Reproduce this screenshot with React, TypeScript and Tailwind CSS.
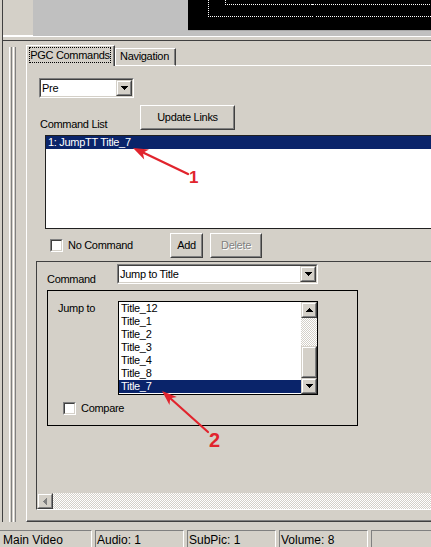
import React from "react";

const FONT = "font-['Liberation_Sans',Arial,sans-serif]";
const CHECKER = "[background:repeating-conic-gradient(#d4d0c8_0%_25%,#ffffff_0%_50%)_0_0/2px_2px]";

function Raised({ className = "", children }: { className?: string; children?: React.ReactNode }) {
  return (
    <div className={`border border-t-white border-l-white border-r-[#404040] border-b-[#404040] ${className}`}>
      <div className="w-full h-full border border-t-[#d4d0c8] border-l-[#d4d0c8] border-r-[#808080] border-b-[#808080] flex items-center justify-center">
        {children}
      </div>
    </div>
  );
}

function SmallBtn({ className = "", children }: { className?: string; children?: React.ReactNode }) {
  return (
    <div className={`w-[16px] h-[16px] shrink-0 bg-[#d4d0c8] border border-t-[#d4d0c8] border-l-[#d4d0c8] border-r-[#404040] border-b-[#404040] ${className}`}>
      <div className="w-full h-full border border-t-white border-l-white border-r-[#808080] border-b-[#808080] flex items-center justify-center">
        {children}
      </div>
    </div>
  );
}

function Down() {
  return (
    <svg width="7" height="4" shapeRendering="crispEdges" className="block">
      <path d="M0 0H7V1H6V2H5V3H4V4H3V3H2V2H1V1H0Z" fill="#000" />
    </svg>
  );
}
function Up() {
  return (
    <svg width="7" height="4" shapeRendering="crispEdges" className="block">
      <path d="M3 0H4V1H5V2H6V3H7V4H0V3H1V2H2V1H3Z" fill="#000" />
    </svg>
  );
}
function Left() {
  return (
    <svg width="4" height="7" shapeRendering="crispEdges" className="block">
      <path d="M3 0H4V7H3V6H2V5H1V4H0V3H1V2H2V1H3Z" fill="#808080" />
    </svg>
  );
}

function Sunken({ className = "", children }: { className?: string; children?: React.ReactNode }) {
  return (
    <div className={`border border-t-[#808080] border-l-[#808080] border-r-white border-b-white ${className}`}>
      <div className="w-full h-full border border-t-[#404040] border-l-[#404040] border-r-[#d4d0c8] border-b-[#d4d0c8] bg-white flex">
        {children}
      </div>
    </div>
  );
}

function Combo({ w, text }: { w: string; text: string }) {
  return (
    <Sunken className={`${w} h-[20px]`}>
      <div className="flex-1 h-full pl-[1px] flex items-center">{text}</div>
      <SmallBtn>
        <Down />
      </SmallBtn>
    </Sunken>
  );
}

function Check() {
  return (
    <div className="w-[13px] h-[13px] shrink-0 border border-t-[#808080] border-l-[#808080] border-r-white border-b-white">
      <div className="w-full h-full bg-white border border-t-[#404040] border-l-[#404040] border-r-[#d4d0c8] border-b-[#d4d0c8]" />
    </div>
  );
}

const titles = ["Title_12", "Title_1", "Title_2", "Title_3", "Title_4", "Title_8", "Title_7"];

function JumpList() {
  return (
    <div className="w-[200px] h-[94px] border border-black bg-white flex">
      <div className="flex-1">
        {titles.map((t, i) => (
          <div
            key={t}
            className={`h-[13px] pl-[2px] ${i === titles.length - 1 ? "bg-[#0a246a] text-white" : ""}`}
          >
            {t}
          </div>
        ))}
      </div>
      <div className="w-[16px] flex flex-col">
        <SmallBtn>
          <Up />
        </SmallBtn>
        <div className={`h-[28px] ${CHECKER}`} />
        <SmallBtn className="h-[32px]" />
        <SmallBtn>
          <Down />
        </SmallBtn>
      </div>
    </div>
  );
}

function Annotations() {
  return (
    <svg
      className="absolute left-0 top-0 pointer-events-none"
      width="431"
      height="547"
      viewBox="0 0 431 547"
    >
      <line x1="142" y1="152" x2="188" y2="174" stroke="#e1242d" strokeWidth="2.4" strokeLinecap="round" />
      <polygon points="133,148 144.2,159.4 142.9,152.7 149,149.4" fill="#e1242d" />
      <text x="189" y="183" fill="#e1242d" fontFamily="Liberation Sans, Arial, sans-serif" fontWeight="700" fontSize="17">
        1
      </text>
      <line x1="170" y1="398" x2="208" y2="432" stroke="#e1242d" strokeWidth="2.2" strokeLinecap="round" />
      <polygon points="162,391 169.5,405.1 170.2,398.3 176.9,396.9" fill="#e1242d" />
      <text x="209" y="447" fill="#e1242d" fontFamily="Liberation Sans, Arial, sans-serif" fontWeight="700" fontSize="20">
        2
      </text>
    </svg>
  );
}

export default function App() {
  return (
    <div
      className={`relative w-[431px] h-[547px] overflow-hidden bg-[#d4d0c8] text-black ${FONT} text-[11px] leading-[13px] tracking-[-0.3px]`}
    >
      <div className="h-[522px] pl-[2px]">
        <div className="h-full flex flex-col border-l border-[#404040]">
          {/* top strip */}
          <div className="h-[36px] flex shrink-0">
            <div className="w-[30px] bg-[#d4d0c8] border-b border-white" />
            <div className="w-[155px] bg-[#c0c0c0]" />
            <div className="flex-1 flex flex-col bg-[#c0c0c0]">
              <div className="h-[30px] bg-black">
                <svg width="243" height="30" shapeRendering="crispEdges" className="block">
                  <rect x="20.5" y="-19.5" width="400" height="36" fill="none" stroke="#fff" strokeDasharray="1 1" />
                  <rect x="37.5" y="-19.5" width="400" height="24" fill="none" stroke="#fff" strokeDasharray="1 1" />
                </svg>
              </div>
              <div className="h-px bg-[#a8a8a8]" />
            </div>
          </div>
          <div className="h-[5px] shrink-0 border-t border-white border-b border-b-[#404040]" />
          {/* main */}
          <div className="flex-1 flex min-h-0">
            <div className="w-[23px] shrink-0 flex pl-[6px] pt-[6px] gap-[1px]">
              <div className="w-[3px] border-l border-white border-r border-r-[#808080]" />
              <div className="w-[3px] border-l border-white border-r border-r-[#808080]" />
            </div>
            <div className="flex-1 min-w-0 flex flex-col">
              {/* tabs */}
              <div className="mt-[4px] h-[21px] flex items-end shrink-0">
                <div className="w-[89px] h-[21px] border-l border-t border-white border-r border-r-[#404040] shadow-[inset_-1px_0_0_#808080] pl-[2px] pt-[1px]">
                  <div className="w-[82px] h-[16px] border border-dotted border-black flex items-center justify-center">
                    PGC Commands
                  </div>
                </div>
                <div className="w-[61px] h-[18px] border-l border-t border-white border-b border-b-white border-r border-r-[#404040] shadow-[inset_-1px_0_0_#808080] pl-[4px] pt-[1px]">
                  Navigation
                </div>
                <div className="flex-1 h-px bg-white" />
              </div>
              {/* panel */}
              <div className="flex-1 flex flex-col border-l border-white border-b border-b-[#404040] shadow-[inset_0_-1px_0_#808080] overflow-hidden">
                <div className="ml-[12px] mt-[12px]">
                  <Combo w="w-[95px]" text="Pre" />
                </div>
                <div className="mt-[7px] ml-[13px] h-[25px] flex">
                  <div className="w-[100px] pt-[13px]">Command List</div>
                  <Raised className="w-[95px] h-[25px]">Update Links</Raised>
                </div>
                <div className="mt-[5px] ml-[18px] w-[420px] h-[94px] shrink-0 border border-[#202020] bg-white">
                  <div className="h-[13px] bg-[#0a246a] text-white pl-[2px]">1: JumpTT Title_7</div>
                </div>
                <div className="mt-[4px] ml-[23px] h-[25px] flex items-center">
                  <div className="w-[120px] flex items-center gap-[5px]">
                    <Check />
                    <span>No Command</span>
                  </div>
                  <Raised className="w-[33px] h-[25px]">Add</Raised>
                  <Raised className="ml-[7px] w-[52px] h-[25px]">
                    <span className="text-[#808080] [text-shadow:1px_1px_0_#ffffff]">Delete</span>
                  </Raised>
                </div>
                {/* scroll panel */}
                <div className="mt-[3px] ml-[9px] w-[420px] h-[249px] shrink-0 flex flex-col border-t border-l border-[#404040] border-b border-b-white">
                  <div className="mt-[2px] ml-[10px] flex">
                    <div className="w-[70px] pt-[9px]">Command</div>
                    <Combo w="w-[201px]" text="Jump to Title" />
                  </div>
                  <div className="mt-[4px] ml-[10px] w-[311px] h-[136px] border border-black">
                    <div className="mt-[10px] flex">
                      <div className="w-[70px] pl-[10px] pt-[1px]">Jump to</div>
                      <JumpList />
                    </div>
                    <div className="mt-[7px] ml-[15px] flex items-center gap-[5px]">
                      <Check />
                      <span>Compare</span>
                    </div>
                  </div>
                  <div className="mt-auto h-[16px] flex">
                    <SmallBtn>
                      <Left />
                    </SmallBtn>
                    <div className={`flex-1 ${CHECKER}`} />
                  </div>
                </div>
              </div>
            </div>
          </div>
        </div>
      </div>
      {/* status bar */}
      <div className="h-[25px] pt-[8px] flex gap-[3px] text-[12px] leading-[14px] tracking-normal">
        <div className="w-[92px] shrink-0 border-t border-[#808080] border-r border-r-white pl-[3px] pt-[2px]">Main Video</div>
        <div className="w-[89px] shrink-0 border-t border-l border-[#808080] border-r border-r-white pl-[1px] pt-[2px]">Audio: 1</div>
        <div className="w-[89px] shrink-0 border-t border-l border-[#808080] border-r border-r-white pl-[1px] pt-[2px]">SubPic: 1</div>
        <div className="w-[89px] shrink-0 border-t border-l border-[#808080] border-r border-r-white pl-[1px] pt-[2px]">Volume: 8</div>
        <div className="flex-1 border-t border-l border-[#808080]" />
      </div>
      <Annotations />
    </div>
  );
}
